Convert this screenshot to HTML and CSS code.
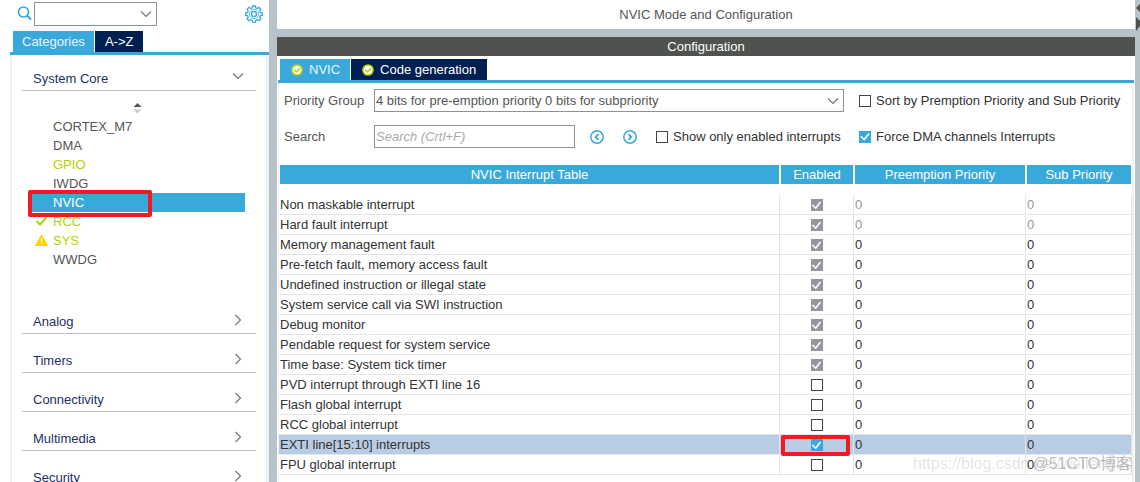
FILE: index.html
```html
<!DOCTYPE html>
<html lang="en">
<head>
<meta charset="utf-8">
<title>NVIC Mode and Configuration</title>
<link rel="stylesheet" href="styles.css">
</head>
<body>
<svg class="defs" width="0" height="0" aria-hidden="true">
  <symbol id="down" viewBox="0 0 12 8"><path d="M1 1.500 6 6.500 11 1.500" fill="none" stroke="#777" stroke-width="1.200"/></symbol>
  <symbol id="right" viewBox="0 0 8 12"><path d="M1.500 1 6.500 6 1.500 11" fill="none" stroke="#777" stroke-width="1.200"/></symbol>
  <symbol id="ok" viewBox="0 0 12 12"><circle cx="6" cy="6" r="5.100" fill="#fff" stroke="#bccf00" stroke-width="1.500"/><path d="M3.300 5.800 5.400 7.900 8.900 4.400" fill="none" stroke="#bccf00" stroke-width="1.500"/></symbol>
</svg>
<div class="app">
  <aside class="side">
    <div class="finder">
      <svg class="lens" viewBox="0 0 15 15"><circle cx="6.500" cy="6" r="5" fill="none" stroke="#39a9dc" stroke-width="1.700"/><path d="M10.200 9.700 14 13.500" stroke="#39a9dc" stroke-width="2"/></svg>
      <span class="combo small"><select aria-label="Find"><option></option></select><svg class="arrow"><use href="#down"/></svg></span>
      <button class="icon gear" aria-label="Settings"><svg viewBox="0 0 18 18"><g fill="none" stroke="#39a9dc" stroke-width="1.300"><path d="M7.500 1h3l.4 2 1.300.5 1.800-1.100 1.900 1.900-1.100 1.800.5 1.300 2 .4v2.600l-2 .4-.5 1.300 1.100 1.800-1.900 1.900-1.800-1.100-1.300.5-.4 2h-3l-.4-2-1.300-.5L4 15.800l-1.900-1.900 1.100-1.800-.5-1.300-2-.4V7.800l2-.4.5-1.300L2.100 4.300 4 2.400l1.800 1.100L7.100 3z"/><circle cx="9" cy="9" r="4.600" stroke-width=".8"/><circle cx="9" cy="9" r="2.500"/></g></svg></button>
    </div>
    <div class="tabs side-tabs"><button class="tab on">Categories</button><button class="tab">A-&gt;Z</button></div>
    <nav class="tree">
      <button class="group first">System Core<svg class="arrow"><use href="#down"/></svg></button>
      <div class="core">
        <svg class="sort" viewBox="0 0 8 12"><path d="M0 5 4 1 8 5z" fill="#555"/><path d="M0 7.500 4 11.500 8 7.500z" fill="#ccc"/></svg>
        <ul>
          <li>CORTEX_M7</li>
          <li>DMA</li>
          <li class="used">GPIO</li>
          <li>IWDG</li>
          <li class="current">NVIC<span class="mark"></span></li>
          <li class="used"><svg class="state" viewBox="0 0 13 12"><path d="M1.500 6 5 9.500 11.500 2.500" fill="none" stroke="#bccf00" stroke-width="2"/></svg>RCC</li>
          <li class="used"><svg class="state" viewBox="0 0 13 12"><path d="M6.500 1 12.500 11.500H.5z" fill="#ffd200" stroke="#ffd200" stroke-linejoin="round"/><path d="M6.500 4v4M6.500 9v1.200" stroke="#fff" stroke-width="1.200"/></svg>SYS</li>
          <li>WWDG</li>
        </ul>
      </div>
      <button class="group">Analog<svg class="arrow"><use href="#right"/></svg></button>
      <button class="group">Timers<svg class="arrow"><use href="#right"/></svg></button>
      <button class="group">Connectivity<svg class="arrow"><use href="#right"/></svg></button>
      <button class="group">Multimedia<svg class="arrow"><use href="#right"/></svg></button>
      <button class="group">Security<svg class="arrow"><use href="#right"/></svg></button>
    </nav>
  </aside>
  <main class="main">
    <h1>NVIC Mode and Configuration</h1>
    <h2>Configuration</h2>
    <section class="config">
      <div class="tabs"><button class="tab on"><svg class="ok"><use href="#ok"/></svg>NVIC</button><button class="tab"><svg class="ok"><use href="#ok"/></svg>Code generation</button></div>
      <div class="panel">
        <form class="form">
          <label class="name" for="group">Priority Group</label>
          <span class="combo"><select id="group"><option>4 bits for pre-emption priority 0 bits for subpriority</option></select><svg class="arrow"><use href="#down"/></svg></span>
          <label class="check"><input type="checkbox">Sort by Premption Priority and Sub Priority</label>
          <label class="name" for="search">Search</label>
          <div class="search">
            <input id="search" type="text" placeholder="Search (Crtl+F)">
            <button type="button" class="icon step" aria-label="Previous"><svg viewBox="0 0 14 14"><g fill="none" stroke="#39a9dc"><circle cx="7" cy="7" r="6.200" stroke-width="1.500"/><path d="M8.500 4.200 5.700 7 8.500 9.800" stroke-width="1.800"/></g></svg></button>
            <button type="button" class="icon step" aria-label="Next"><svg viewBox="0 0 14 14"><g fill="none" stroke="#39a9dc"><circle cx="7" cy="7" r="6.200" stroke-width="1.500"/><path d="M5.500 4.200 8.300 7 5.500 9.800" stroke-width="1.800"/></g></svg></button>
            <label class="check"><input type="checkbox">Show only enabled interrupts</label>
          </div>
          <label class="check"><input type="checkbox" checked>Force DMA channels Interrupts</label>
        </form>
        <table>
          <colgroup><col><col class="c-on"><col class="c-pre"><col class="c-sub"></colgroup>
          <thead><tr><th>NVIC Interrupt Table</th><th>Enabled</th><th>Preemption Priority</th><th>Sub Priority</th></tr></thead>
          <tbody>
            <tr class="locked"><td>Non maskable interrupt</td><td><input type="checkbox" aria-label="Enabled" checked disabled></td><td>0</td><td>0</td></tr>
            <tr class="locked"><td>Hard fault interrupt</td><td><input type="checkbox" aria-label="Enabled" checked disabled></td><td>0</td><td>0</td></tr>
            <tr><td>Memory management fault</td><td><input type="checkbox" aria-label="Enabled" checked disabled></td><td>0</td><td>0</td></tr>
            <tr><td>Pre-fetch fault, memory access fault</td><td><input type="checkbox" aria-label="Enabled" checked disabled></td><td>0</td><td>0</td></tr>
            <tr><td>Undefined instruction or illegal state</td><td><input type="checkbox" aria-label="Enabled" checked disabled></td><td>0</td><td>0</td></tr>
            <tr><td>System service call via SWI instruction</td><td><input type="checkbox" aria-label="Enabled" checked disabled></td><td>0</td><td>0</td></tr>
            <tr><td>Debug monitor</td><td><input type="checkbox" aria-label="Enabled" checked disabled></td><td>0</td><td>0</td></tr>
            <tr><td>Pendable request for system service</td><td><input type="checkbox" aria-label="Enabled" checked disabled></td><td>0</td><td>0</td></tr>
            <tr><td>Time base: System tick timer</td><td><input type="checkbox" aria-label="Enabled" checked disabled></td><td>0</td><td>0</td></tr>
            <tr><td>PVD interrupt through EXTI line 16</td><td><input type="checkbox" aria-label="Enabled"></td><td>0</td><td>0</td></tr>
            <tr><td>Flash global interrupt</td><td><input type="checkbox" aria-label="Enabled"></td><td>0</td><td>0</td></tr>
            <tr><td>RCC global interrupt</td><td><input type="checkbox" aria-label="Enabled"></td><td>0</td><td>0</td></tr>
            <tr class="picked"><td>EXTI line[15:10] interrupts</td><td><input type="checkbox" aria-label="Enabled" checked><span class="mark"></span></td><td>0</td><td>0</td></tr>
            <tr><td>FPU global interrupt</td><td><input type="checkbox" aria-label="Enabled"></td><td>0</td><td>0</td></tr>
          </tbody>
        </table>
      </div>
    </section>
  </main>
  <div class="edge"><svg viewBox="0 0 5 32"><path d="M5 4 1 8 5 12zM1 17 5 21v5L1 31z" fill="#505250"/></svg></div>
</div>
<div class="water url">https://blog.csdn.net/weifengdq</div>
<div class="water site">@51CTO博客</div>
</body>
</html>
```
FILE: styles.css
```css
* { box-sizing: border-box; }
body { margin: 0; background: #fff; color: #555; font: 13px/16px "Liberation Sans", "Noto Sans CJK SC", sans-serif; }
button, input, select { font: inherit; color: inherit; }
button { padding: 0; border: 0; background: none; }
.defs { position: absolute; }
.app { display: flex; height: 100vh; overflow: hidden; background: #b7c3c9; }
.arrow { flex: none; width: 12px; height: 12px; }
.icon { display: flex; }

.side { flex: none; width: 269px; padding-left: 10px; background: #fff; }
.finder { display: flex; align-items: center; height: 31px; padding: 0 6px 4px 7px; }
.lens { width: 15px; height: 15px; margin-right: 2px; }
.combo { position: relative; display: flex; }
.combo select { width: 100%; height: 23px; padding: 0 1px; border: 1px solid #8c9298; border-radius: 0; background: #fff; appearance: none; }
.combo .arrow { position: absolute; right: 5px; top: 6px; pointer-events: none; }
.small { width: 123px; }
.small select { height: 24px; }
.gear { width: 18px; height: 18px; margin-left: auto; }
.gear svg { width: 18px; height: 18px; }

.tabs { display: flex; gap: 1px; padding: 3px 0 0 2px; border-bottom: 3px solid #39a9dc; }
.side-tabs { padding: 0 0 0 3px; }
.tab { display: flex; align-items: center; height: 21px; padding: 0 11px; background: #002052; color: #fff; }
.tab.on { padding-right: 10px; background: #39a9dc; color: #e6f6ff; }
.side-tabs .tab { padding: 0 10px; }
.side-tabs .on { padding: 0 9px; }
.ok { width: 12px; height: 12px; margin-right: 6px; }

.tree { height: 100%; padding: 0 10px; border: solid #f0f0f0; border-width: 0 3px 0 2px; }
.group { display: flex; justify-content: space-between; width: 100%; height: 39px; margin: 0; padding: 19px 12px 0 11px; border-bottom: 1px solid #b7c3c9; color: #1d2f66; }
.first { height: 36px; padding-top: 16px; }
.first .arrow { margin-top: -1px; }
.core { height: 204px; padding: 11px 11px 0 8px; }
.sort { display: block; width: 9px; height: 12px; margin: 0 auto; }
.core ul { margin: 3px 0 0; padding: 0; list-style: none; }
.core li { position: relative; height: 19px; padding-left: 23px; line-height: 19px; }
.core .used { color: #bccf00; }
.core .current { background: #39a9dc; color: #fff; }
.state { position: absolute; left: 5px; top: 3px; width: 13px; height: 12px; }
.mark { position: absolute; z-index: 1; border: 4px solid #ed1c24; border-radius: 2px; }
.current .mark { left: -1px; top: -3px; width: 124px; height: 27px; }
.core .mark { left: -2px; }

.main { flex: 1; min-width: 0; display: flex; flex-direction: column; margin-left: 8px; }
h1, h2 { margin: 0; font-size: 13px; font-weight: normal; text-align: center; }
h1 { height: 29px; line-height: 29px; background: #fff; }
h2 { height: 19px; margin-top: 8px; line-height: 19px; background: #505250; color: #fff; }
.config { flex: 1; padding: 0 1px; background: #fff; }
.panel { height: 100%; padding-top: 6px; border: solid #f0f0f0; border-width: 0 2px 0 1px; }
.form { display: grid; grid-template-columns: 75px 470px 1fr; gap: 13px 15px; align-items: center; padding: 0 5px; }
.name { white-space: nowrap; }
.search { display: flex; align-items: center; }
.search input[type="text"] { width: 201px; height: 23px; padding: 0 1px; border: 1px solid #8c9298; }
.search input::placeholder { color: #aaa; font-style: italic; }
.step { width: 14px; height: 14px; margin-left: 15px; }
.step + .step { margin-left: 19px; }
.step svg { width: 14px; height: 14px; }
.search .check { margin-left: 19px; }
.check { display: flex; align-items: center; gap: 5px; color: #333; white-space: nowrap; }
input[type="checkbox"] { flex: none; display: block; width: 12px; height: 12px; margin: 0; border: 1px solid #444; background: #fff; appearance: none; }
input[type="checkbox"]:checked { border: 0; background: #39a9dc; }
input[type="checkbox"]:checked::after { content: ""; display: block; width: 12px; height: 12px; background: #fff; clip-path: polygon(10% 53%, 21% 45%, 42% 66%, 78% 20%, 89% 29%, 44% 86%); }
input[type="checkbox"]:disabled { background: #92989d; }

table { width: 100%; margin-top: 17px; border-collapse: separate; border-spacing: 0; table-layout: fixed; color: #333; }
.c-on { width: 74px; }
.c-pre { width: 172px; }
.c-sub { width: 106px; }
th { height: 30px; padding: 0; border: solid #fff; border-width: 0 1px 11px; background: #39a9dc; background-clip: padding-box; color: #fff; font-weight: normal; }
td { position: relative; height: 20px; padding: 1px 1px 0; border: solid #e3e5e8; border-width: 0 1px 1px 0; line-height: 16px; }
td input[type="checkbox"] { margin: 0 auto; }
.locked td + td { color: #999; }
.picked td { background: #b8cde4; }
td .mark { left: 1px; top: 0; width: 69px; height: 21px; }

.edge { flex: none; width: 5px; }
.edge svg { display: block; width: 5px; height: 32px; }
.water { position: absolute; pointer-events: none; white-space: nowrap; }
.url { right: 8px; bottom: 8px; width: 219px; overflow: hidden; color: rgba(0, 0, 0, .12); font-size: 16px; line-height: 20px; }
.site { right: 8px; bottom: 8px; color: rgba(90, 90, 90, .4); font-size: 16px; line-height: 20px; }
```
